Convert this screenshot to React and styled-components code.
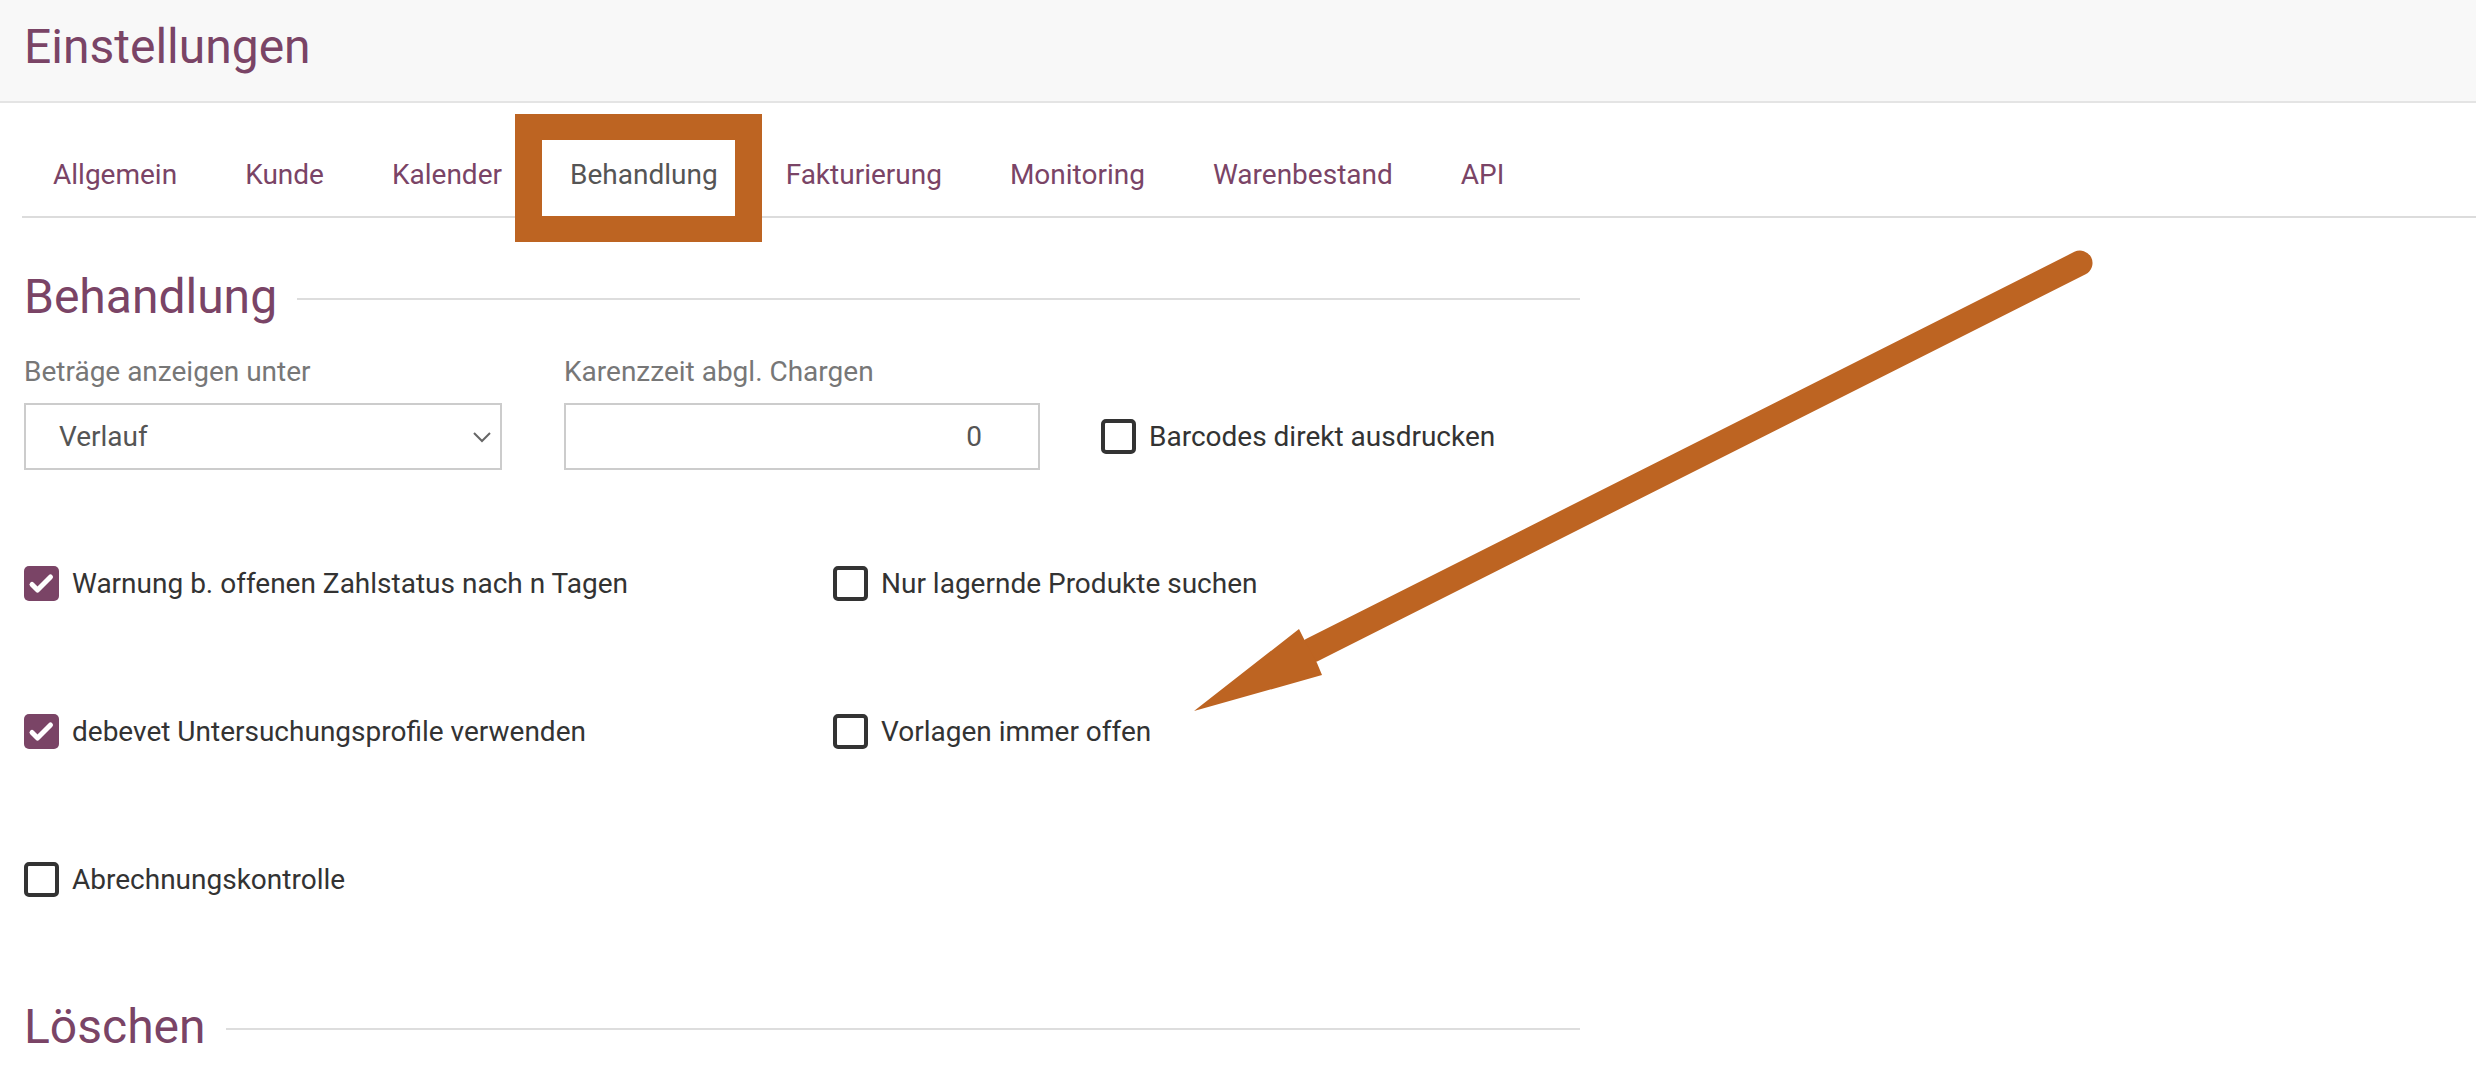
import React from 'react'
import styled, { createGlobalStyle } from 'styled-components'

const purple = '#7a4466'
const orange = '#bd6422'

const GlobalStyle = createGlobalStyle`
    * { box-sizing: border-box; }
    body {
        margin: 0;
        background: #fff;
        font-family: Roboto, "Liberation Sans", Arial, sans-serif;
    }
`

const Page = styled.div`
    position: relative;
    min-height: 1074px;
    overflow: hidden;
`

const Header = styled.header`
    height: 103px;
    padding: 18px 24px 0;
    background: #f8f8f8;
    border-bottom: 2px solid #e4e4e4;
`

const Title = styled.h1`
    margin: 0;
    font-size: 48px;
    line-height: 58px;
    font-weight: 400;
    color: ${purple};
`

const TabBar = styled.nav`
    margin: 37px 0 0 22px;
    border-bottom: 2px solid #dcdcdc;
`

const TabList = styled.ul`
    display: flex;
    gap: 68px;
    margin: 0;
    padding: 0 0 0 31px;
    list-style: none;
`

const Tab = styled.li`
    position: relative;
    padding: 15px 0 21px;
    font-size: 28px;
    line-height: 40px;
    color: ${p => (p.$active ? '#555' : purple)};
    background: #fff;
    cursor: pointer;
`

// the orange frame from the screenshot annotation
const Highlight = styled.span`
    position: absolute;
    left: -55px;
    right: -44px;
    top: -26px;
    bottom: -26px;
    border: 27px solid ${orange};
    border-top-width: 26px;
    border-bottom-width: 26px;
    pointer-events: none;
`

const Content = styled.main`
    width: 1556px;
    margin-left: 24px;
`

const SectionTitle = styled.div`
    display: flex;
    align-items: center;
    margin-top: ${p => p.$top}px;

    h2 {
        margin: 0;
        font-size: 48px;
        line-height: 58px;
        font-weight: 400;
        color: ${purple};
    }
`

const Rule = styled.div`
    flex: 1;
    height: 2px;
    margin: 4px 0 0 20px;
    background: #dddddd;
`

const FieldRow = styled.div`
    display: grid;
    grid-template-columns: 480px 477px auto;
    column-gap: 60px;
    margin-top: 26px;
`

const Field = styled.div`
    display: flex;
    flex-direction: column;
`

const Label = styled.label`
    font-size: 28px;
    line-height: 40px;
    color: #777;
    margin-bottom: 11px;
`

const SelectBox = styled.div`
    display: flex;
    align-items: center;
    justify-content: space-between;
    width: 478px;
    height: 67px;
    padding: 0 8px 0 33px;
    border: 2px solid #cccccc;
    font-size: 28px;
    color: #555;
`

const NumberBox = styled.div`
    display: flex;
    align-items: center;
    justify-content: flex-end;
    width: 476px;
    height: 67px;
    padding-right: 56px;
    border: 2px solid #cccccc;
    font-size: 28px;
    color: #555;
`

const CheckCell = styled.div`
    display: flex;
    align-items: flex-end;
    padding-bottom: 14px;
`

const CheckGrid = styled.div`
    display: grid;
    grid-template-columns: repeat(2, 750px);
    column-gap: 59px;
    row-gap: 108px;
    margin-top: 93px;
`

const Check = styled.label`
    display: flex;
    align-items: center;
    gap: 13px;
    height: 40px;
    font-size: 28px;
    color: #333;
`

const Box = styled.span`
    display: flex;
    align-items: center;
    justify-content: center;
    width: 35px;
    height: 35px;
    border-radius: 5px;
    border: ${p => (p.$on ? 'none' : '4px solid #333')};
    background: ${p => (p.$on ? purple : '#fff')};
`

const CheckBox = ({ on, children }) => (
    <Check>
        <Box $on={on}>
            {on && (
                <svg width="35" height="35" viewBox="0 0 35 35">
                    <path d="M8 18.5 L13.5 24 L26.5 11" fill="none" stroke="#fff" strokeWidth="5" strokeLinecap="round" strokeLinejoin="round" />
                </svg>
            )}
        </Box>
        {children}
    </Check>
)

const Annotation = styled.svg`
    position: absolute;
    left: 0;
    top: 0;
    pointer-events: none;
`

const tabs = ['Allgemein', 'Kunde', 'Kalender', 'Behandlung', 'Fakturierung', 'Monitoring', 'Warenbestand', 'API']

const App = () => {
    return (
        <Page>
            <GlobalStyle />
            <Header>
                <Title>Einstellungen</Title>
            </Header>
            <TabBar>
                <TabList>
                    {tabs.map(t => (
                        <Tab key={t} $active={t === 'Behandlung'}>
                            {t}
                            {t === 'Behandlung' && <Highlight />}
                        </Tab>
                    ))}
                </TabList>
            </TabBar>
            <Content>
                <SectionTitle $top={50}>
                    <h2>Behandlung</h2>
                    <Rule />
                </SectionTitle>
                <FieldRow>
                    <Field>
                        <Label>Beträge anzeigen unter</Label>
                        <SelectBox>
                            Verlauf
                            <svg width="20" height="12" viewBox="0 0 20 12">
                                <path d="M2 2 L10 10 L18 2" fill="none" stroke="#666" strokeWidth="2" />
                            </svg>
                        </SelectBox>
                    </Field>
                    <Field>
                        <Label>Karenzzeit abgl. Chargen</Label>
                        <NumberBox>0</NumberBox>
                    </Field>
                    <CheckCell>
                        <CheckBox>Barcodes direkt ausdrucken</CheckBox>
                    </CheckCell>
                </FieldRow>
                <CheckGrid>
                    <CheckBox on>Warnung b. offenen Zahlstatus nach n Tagen</CheckBox>
                    <CheckBox>Nur lagernde Produkte suchen</CheckBox>
                    <CheckBox on>debevet Untersuchungsprofile verwenden</CheckBox>
                    <CheckBox>Vorlagen immer offen</CheckBox>
                    <CheckBox>Abrechnungskontrolle</CheckBox>
                </CheckGrid>
                <SectionTitle $top={99}>
                    <h2>Löschen</h2>
                    <Rule />
                </SectionTitle>
            </Content>
            <Annotation width="2476" height="1074" viewBox="0 0 2476 1074">
                <line x1="2080" y1="263" x2="1312" y2="650" stroke={orange} strokeWidth="25" strokeLinecap="round" />
                <polygon points="1194,711 1299,629 1305,641 1317,663 1322,675" fill={orange} />
            </Annotation>
        </Page>
    )
}

export default App
